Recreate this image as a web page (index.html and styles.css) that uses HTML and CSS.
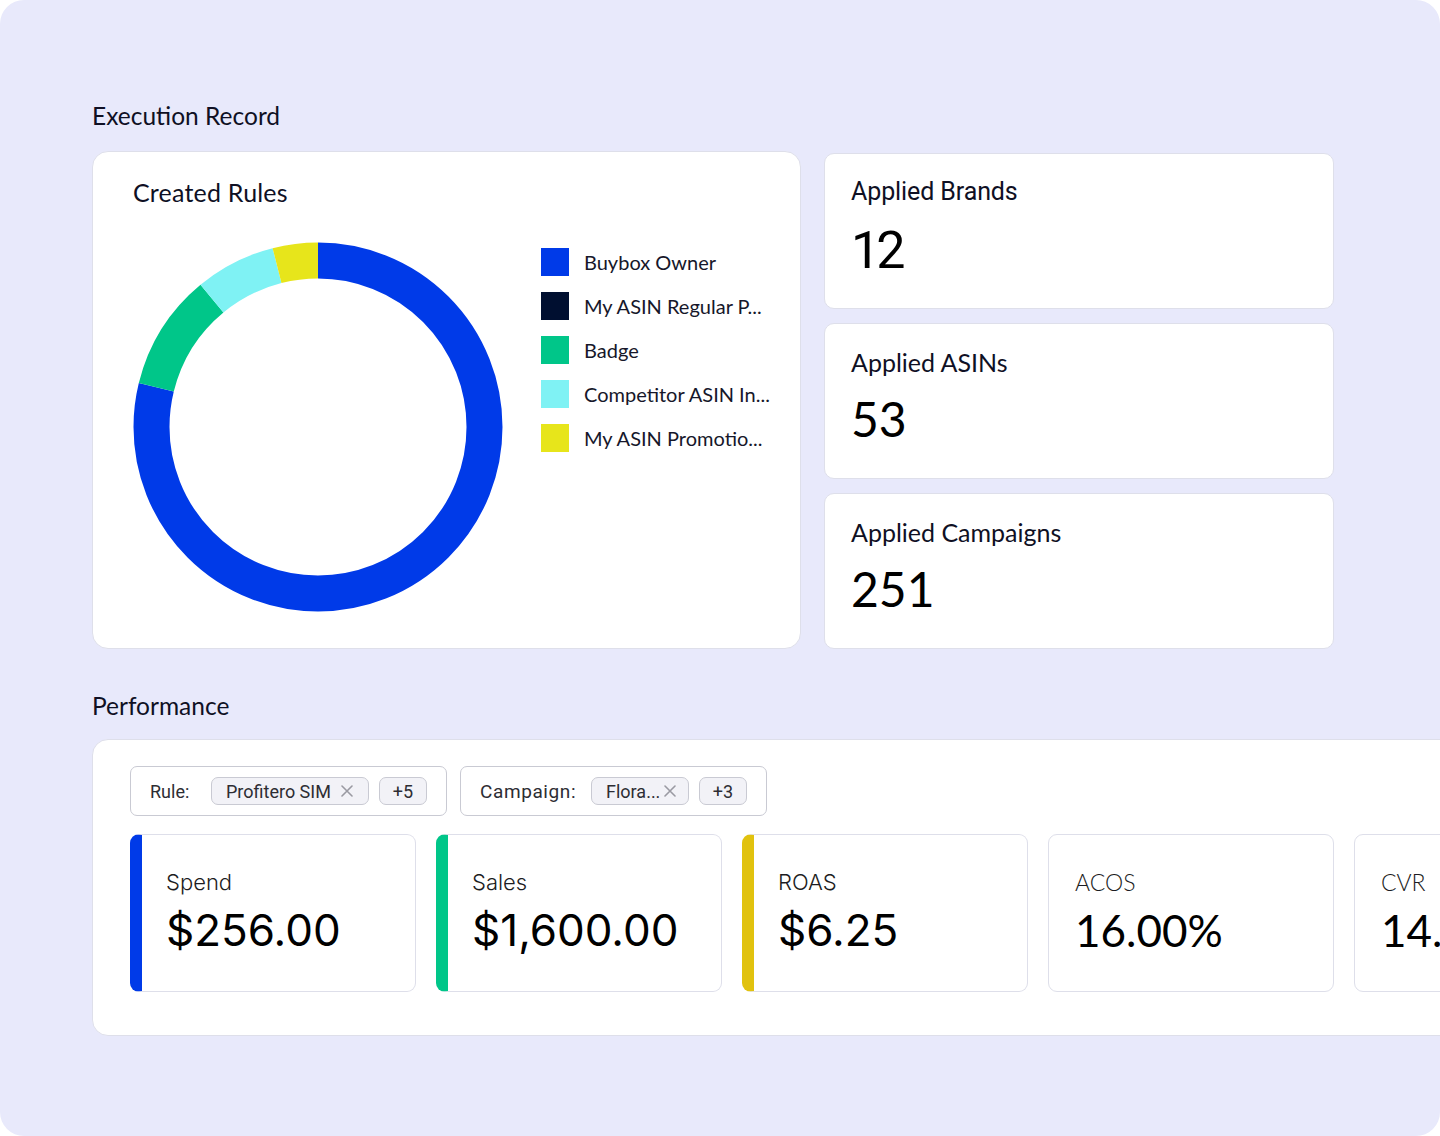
FILE: index.html
```html
<!DOCTYPE html>
<html lang="en">
<head>
<meta charset="utf-8">
<title>Execution Record</title>
<link rel="stylesheet" href="styles.css">
</head>
<body>
<div class="frame">
  <h2 class="section-title first">Execution Record</h2>
  <div class="exec-row">
    <section class="card rules-card">
      <h3 class="card-title">Created Rules</h3>
      <div class="rules-body">
        <svg class="donut" width="370" height="370" viewBox="0 0 370 370">
          <g transform="rotate(-90 185 185)" fill="none" stroke-width="36">
            <circle cx="185" cy="185" r="166.5" stroke="#003ae8" stroke-dasharray="824.4 1046.15" stroke-dashoffset="0"/>
            <circle cx="185" cy="185" r="166.5" stroke="#00c689" stroke-dasharray="106.4 1046.15" stroke-dashoffset="-824.4"/>
            <circle cx="185" cy="185" r="166.5" stroke="#7ff2f4" stroke-dasharray="73.5 1046.15" stroke-dashoffset="-930.8"/>
            <circle cx="185" cy="185" r="166.5" stroke="#e7e51b" stroke-dasharray="41.9 1046.15" stroke-dashoffset="-1004.3"/>
          </g>
        </svg>
        <ul class="legend">
          <li><span class="swatch c-blue"></span>Buybox Owner</li>
          <li><span class="swatch c-navy"></span>My ASIN Regular P...</li>
          <li><span class="swatch c-green"></span>Badge</li>
          <li><span class="swatch c-cyan"></span>Competitor ASIN In...</li>
          <li><span class="swatch c-yellow"></span>My ASIN Promotio...</li>
        </ul>
      </div>
    </section>
    <div class="stat-col">
      <section class="card stat-card">
        <h3 class="stat-title alt">Applied Brands</h3>
        <div class="stat-value alt">12</div>
      </section>
      <section class="card stat-card">
        <h3 class="stat-title">Applied ASINs</h3>
        <div class="stat-value">53</div>
      </section>
      <section class="card stat-card">
        <h3 class="stat-title">Applied Campaigns</h3>
        <div class="stat-value">251</div>
      </section>
    </div>
  </div>

  <h2 class="section-title perf">Performance</h2>
  <section class="card perf-card">
    <div class="filters">
      <div class="filter">
        <span class="filter-label rule">Rule:</span>
        <span class="chip name-long">Profitero SIM
          <svg class="chip-x" width="12" height="12" viewBox="0 0 12 12"><path d="M1 1 L11 11 M11 1 L1 11" stroke="#9a9aa2" stroke-width="1.6" stroke-linecap="round"/></svg>
        </span>
        <span class="chip count">+5</span>
      </div>
      <div class="filter">
        <span class="filter-label campaign">Campaign:</span>
        <span class="chip name-short">Flora...
          <svg class="chip-x" width="12" height="12" viewBox="0 0 12 12"><path d="M1 1 L11 11 M11 1 L1 11" stroke="#9a9aa2" stroke-width="1.6" stroke-linecap="round"/></svg>
        </span>
        <span class="chip count">+3</span>
      </div>
    </div>
    <div class="metrics">
      <div class="metric bar-blue">
        <div class="metric-label">Spend</div>
        <div class="metric-value">$256.00</div>
      </div>
      <div class="metric bar-green">
        <div class="metric-label">Sales</div>
        <div class="metric-value">$1,600.00</div>
      </div>
      <div class="metric bar-gold">
        <div class="metric-label">ROAS</div>
        <div class="metric-value">$6.25</div>
      </div>
      <div class="metric plain">
        <div class="metric-label wide">ACOS</div>
        <div class="metric-value wide">16.00%</div>
      </div>
      <div class="metric plain">
        <div class="metric-label wide">CVR</div>
        <div class="metric-value wide">14.29%</div>
      </div>
    </div>
  </section>
</div>
</body>
</html>
```

FILE: styles.css
```css
* { box-sizing: border-box; }

html, body {
  margin: 0;
  padding: 0;
  background: #ffffff;
}

.frame {
  width: 1440px;
  height: 1136px;
  background: #e8e9fb;
  border-radius: 24px;
  overflow: hidden;
  padding: 101px 0 0 92px;
  font-family: "Lato", "Open Sans", sans-serif;
  color: #0f1024;
}

.section-title {
  margin: 0;
  font-size: 24.5px;
  line-height: 30px;
  font-weight: 400;
}

.section-title.perf {
  margin-top: 42px;
}

.exec-row {
  display: flex;
  gap: 23px;
  margin-top: 20px;
}

.card {
  background: #ffffff;
  border: 1px solid #dedfea;
  border-radius: 16px;
}

.rules-card {
  width: 709px;
  height: 498px;
  padding: 25px 0 0 40px;
}

.card-title {
  margin: 0;
  font-size: 25px;
  line-height: 30px;
  font-weight: 400;
  letter-spacing: 0.2px;
}

.rules-body {
  display: flex;
  align-items: flex-start;
  gap: 38px;
  margin-top: 35px;
}

.donut {
  display: block;
  flex: none;
}

.legend {
  list-style: none;
  margin: 6px 0 0;
  padding: 0;
  display: flex;
  flex-direction: column;
  gap: 16px;
}

.legend li {
  display: flex;
  align-items: center;
  gap: 15px;
  height: 28px;
  font-size: 20px;
  color: #16172a;
  white-space: nowrap;
}

.swatch {
  width: 28px;
  height: 28px;
  flex: none;
}

.c-blue { background: #003ae8; }
.c-navy { background: #000f30; }
.c-green { background: #00c689; }
.c-cyan { background: #7ff2f4; }
.c-yellow { background: #e7e51b; }

.stat-col {
  display: flex;
  flex-direction: column;
  gap: 14px;
  margin-top: 2px;
}

.stat-card {
  width: 510px;
  height: 156px;
  border-radius: 10px;
  padding: 23px 0 0 26px;
}

.stat-title {
  margin: 0;
  font-size: 25px;
  line-height: 30px;
  font-weight: 400;
}

.stat-title.alt {
  font-family: "Roboto", sans-serif;
  font-size: 25px;
  letter-spacing: -0.1px;
}

.stat-value {
  margin-top: 14px;
  font-size: 48px;
  line-height: 56px;
  font-weight: 400;
  color: #000000;
}

.stat-value.alt {
  font-family: "Roboto", sans-serif;
  font-size: 52px;
  letter-spacing: -4px;
  margin-top: 16px;
}

.perf-card {
  margin-top: 18px;
  width: 1720px;
  height: 297px;
  border-radius: 16px;
  padding: 26px 0 0 37px;
}

.filters {
  display: flex;
  gap: 13px;
}

.filter {
  display: flex;
  align-items: center;
  height: 50px;
  border: 1px solid #c9cad3;
  border-radius: 7px;
  padding: 0 19px;
  font-family: "Roboto", sans-serif;
  font-size: 18px;
  color: #2d2d33;
}

.filter-label.rule { width: 61px; }
.filter-label.campaign { width: 111px; letter-spacing: 0.6px; font-size: 19px; }

.chip {
  display: inline-flex;
  align-items: center;
  justify-content: space-between;
  height: 28px;
  padding: 0 14px;
  background: #f2f2f7;
  border: 1px solid #c9cad3;
  border-radius: 7px;
  color: #2d2d33;
  white-space: nowrap;
}

.chip.name-long { width: 158px; padding-right: 15px; }
.chip.name-short { width: 98px; padding-right: 12px; }

.chip + .chip {
  margin-left: 10px;
}

.chip-x {
  display: block;
  flex: none;
}

.chip.count {
  width: 48px;
  padding: 0;
  justify-content: center;
}

.metrics {
  display: flex;
  gap: 20px;
  margin-top: 18px;
}

.metric {
  flex: none;
  width: 286px;
  height: 158px;
  border: 1px solid #dedfea;
  border-radius: 9px;
  padding: 33px 0 0 24px;
  background: #ffffff;
}

.metric.bar-blue { border-left: 12px solid #003ae8; }
.metric.bar-green { border-left: 12px solid #00c689; }
.metric.bar-gold { border-left: 12px solid #e1c20e; }
.metric.plain { padding-left: 26px; }

.metric-label {
  font-family: "Inter", sans-serif;
  font-weight: 300;
  font-size: 22px;
  line-height: 28px;
  color: #1c1c22;
}

.metric-value {
  margin-top: 8px;
  font-family: "Inter", sans-serif;
  font-size: 44px;
  line-height: 52px;
  font-weight: 400;
  color: #000000;
}

.metric-label.wide {
  font-family: "Lato", sans-serif;
  font-size: 23px;
}

.metric-value.wide {
  font-family: "Lato", sans-serif;
  font-size: 44px;
}
```
